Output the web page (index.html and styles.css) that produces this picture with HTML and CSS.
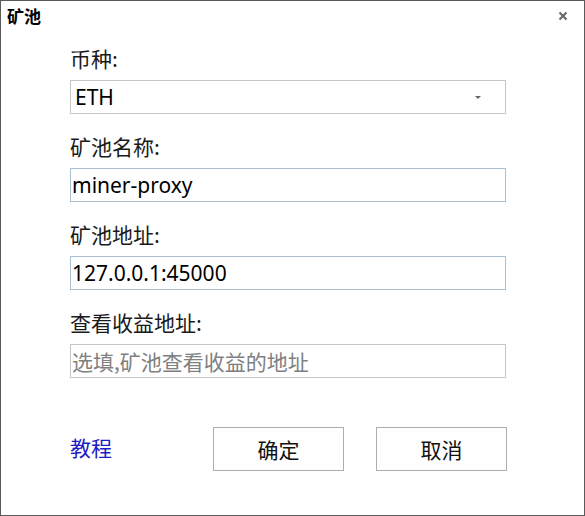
FILE: index.html
```html
<!DOCTYPE html>
<html lang="zh">
<head>
<meta charset="utf-8">
<title>矿池</title>
<link rel="stylesheet" href="styles.css">
</head>
<body>
<div class="window">
  <div class="titlebar">
    <span class="title">矿池</span>
    <svg class="close" width="10" height="10" viewBox="0 0 10 10"><path d="M1.5 1.5 L8.5 8.5 M8.5 1.5 L1.5 8.5" stroke="#666" stroke-width="2" fill="none"/></svg>
  </div>
  <div class="form">
    <div class="group">
      <div class="label">币种:</div>
      <div class="field select"><span class="value">ETH</span><span class="arrow"></span></div>
    </div>
    <div class="group">
      <div class="label">矿池名称:</div>
      <div class="field input"><span class="value">miner-proxy</span></div>
    </div>
    <div class="group">
      <div class="label">矿池地址:</div>
      <div class="field input"><span class="value">127.0.0.1:45000</span></div>
    </div>
    <div class="group">
      <div class="label">查看收益地址:</div>
      <div class="field plain"><span class="value placeholder">选填,矿池查看收益的地址</span></div>
    </div>
    <div class="footer">
      <a class="link">教程</a>
      <div class="buttons">
        <div class="btn">确定</div>
        <div class="btn">取消</div>
      </div>
    </div>
  </div>
</div>
</body>
</html>
```
FILE: styles.css
```css
html, body {
  margin: 0;
  padding: 0;
  background: #fff;
}
.window {
  width: 585px;
  height: 516px;
  box-sizing: border-box;
  border: 1px solid #5a5a5a;
  background: #fff;
  font-family: "Noto Sans", "Noto Sans CJK SC", sans-serif;
  color: #111;
}
.titlebar {
  height: 34px;
  display: flex;
  align-items: center;
  justify-content: space-between;
  padding: 0 14px 0 6px;
}
.title {
  font-family: "Noto Sans CJK SC", sans-serif;
  font-weight: 700;
  font-size: 17px;
  line-height: 20px;
  color: #000;
  margin-top: -4px;
}
.close {
  margin-top: -4px;
  margin-right: 2px;
}
.form {
  padding-left: 69px;
  width: 437px;
  padding-top: 9px;
}
.group {
  margin-bottom: 18px;
}
.label {
  font-family: "Noto Sans CJK SC", sans-serif;
  font-size: 21px;
  line-height: 28px;
  height: 28px;
  color: #1a1a1a;
}
.field {
  margin-top: 8px;
  width: 436px;
  height: 34px;
  box-sizing: border-box;
  border: 1px solid #c6c6c6;
  display: flex;
  align-items: center;
  padding-left: 1px;
  padding-right: 14px;
  justify-content: space-between;
}
.field.input {
  border-color: #aac0d2;
}
.field.select .value {
  padding-left: 3px;
}
.value {
  font-family: "Noto Sans", "Noto Sans CJK SC", sans-serif;
  font-size: 21px;
  line-height: 30px;
  color: #000;
}
.placeholder {
  font-family: "Noto Sans CJK SC", sans-serif;
  font-size: 21px;
  color: #808080;
}
.arrow {
  width: 0;
  height: 0;
  border-left: 3px solid transparent;
  border-right: 3px solid transparent;
  border-top: 3px solid #666;
  margin-right: 10px;
}
.footer {
  margin-top: 49px;
  display: flex;
  align-items: center;
  justify-content: space-between;
  width: 437px;
}
.link {
  font-family: "Noto Sans CJK SC", sans-serif;
  font-size: 21px;
  line-height: 28px;
  color: #1d1dc4;
  margin-top: -4px;
}
.buttons {
  display: flex;
  gap: 32px;
}
.btn {
  width: 131px;
  height: 44px;
  box-sizing: border-box;
  border: 1px solid #adadad;
  background: #fefefe;
  display: flex;
  align-items: center;
  justify-content: center;
  font-family: "Noto Sans CJK SC", sans-serif;
  font-size: 21px;
  color: #111;
}
```
